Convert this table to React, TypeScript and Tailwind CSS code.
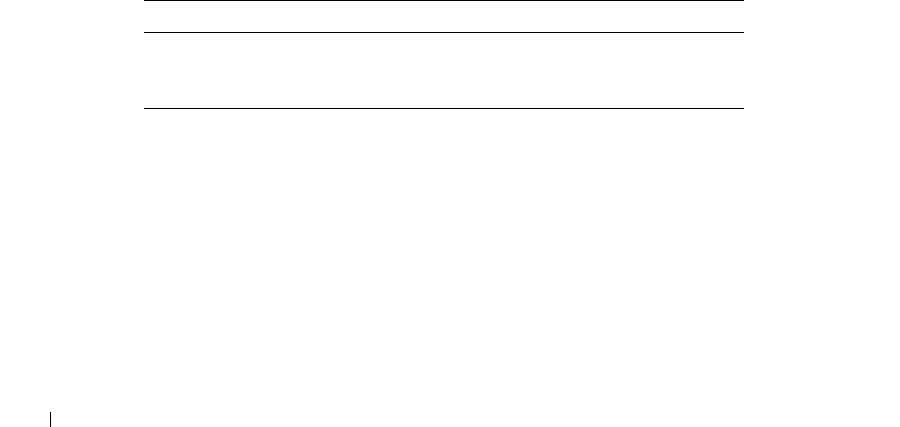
export default function App() {
  return (
    <div className="flex h-[427px] w-[900px] flex-col bg-white font-['Liberation_Sans',sans-serif]">
      <div className="ml-[144px] w-[600px]">
        <div className="h-[32px] border-t border-black" />
        <div className="h-[76px] border-t border-black" />
        <div className="border-t border-black" />
      </div>
      <div className="mt-auto ml-[50px] h-[15px] w-px bg-black" />
    </div>
  );
}
